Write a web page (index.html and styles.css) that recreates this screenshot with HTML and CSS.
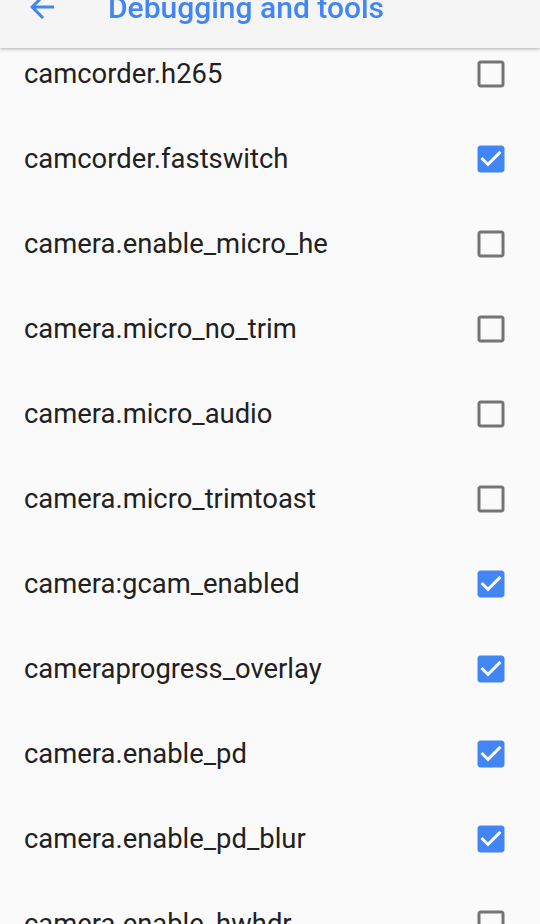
FILE: index.html
```html
<!DOCTYPE html>
<html lang="en">
<head>
    <meta charset="UTF-8">
    <meta name="viewport" content="width=device-width, initial-scale=1.0">
    <title>Debugging and tools</title>
    <link rel="stylesheet" href="styles.css">
</head>
<body>
    <header class="app-bar">
        <svg class="back-icon" viewBox="0 0 24 24"><path d="M20 11H7.83l5.59-5.59L12 4l-8 8 8 8 1.41-1.41L7.83 13H20v-2z"/></svg>
        <h1>Debugging and tools</h1>
    </header>

    <ul class="settings-list">
        <li class="row"><span>camcorder.h265</span><svg class="box" viewBox="0 0 24 24"><path d="M19 5v14H5V5h14m0-2H5c-1.1 0-2 .9-2 2v14c0 1.1.9 2 2 2h14c1.1 0 2-.9 2-2V5c0-1.1-.9-2-2-2z"/></svg></li>
        <li class="row"><span>camcorder.fastswitch</span><svg class="box checked" viewBox="0 0 24 24"><path d="M19 3H5c-1.11 0-2 .9-2 2v14c0 1.1.89 2 2 2h14c1.11 0 2-.9 2-2V5c0-1.1-.89-2-2-2zm-9 14l-5-5 1.41-1.41L10 14.17l7.59-7.59L19 8l-9 9z"/></svg></li>
        <li class="row"><span>camera.enable_micro_he</span><svg class="box" viewBox="0 0 24 24"><path d="M19 5v14H5V5h14m0-2H5c-1.1 0-2 .9-2 2v14c0 1.1.9 2 2 2h14c1.1 0 2-.9 2-2V5c0-1.1-.9-2-2-2z"/></svg></li>
        <li class="row"><span>camera.micro_no_trim</span><svg class="box" viewBox="0 0 24 24"><path d="M19 5v14H5V5h14m0-2H5c-1.1 0-2 .9-2 2v14c0 1.1.9 2 2 2h14c1.1 0 2-.9 2-2V5c0-1.1-.9-2-2-2z"/></svg></li>
        <li class="row"><span>camera.micro_audio</span><svg class="box" viewBox="0 0 24 24"><path d="M19 5v14H5V5h14m0-2H5c-1.1 0-2 .9-2 2v14c0 1.1.9 2 2 2h14c1.1 0 2-.9 2-2V5c0-1.1-.9-2-2-2z"/></svg></li>
        <li class="row"><span>camera.micro_trimtoast</span><svg class="box" viewBox="0 0 24 24"><path d="M19 5v14H5V5h14m0-2H5c-1.1 0-2 .9-2 2v14c0 1.1.9 2 2 2h14c1.1 0 2-.9 2-2V5c0-1.1-.9-2-2-2z"/></svg></li>
        <li class="row"><span>camera:gcam_enabled</span><svg class="box checked" viewBox="0 0 24 24"><path d="M19 3H5c-1.11 0-2 .9-2 2v14c0 1.1.89 2 2 2h14c1.11 0 2-.9 2-2V5c0-1.1-.89-2-2-2zm-9 14l-5-5 1.41-1.41L10 14.17l7.59-7.59L19 8l-9 9z"/></svg></li>
        <li class="row"><span>cameraprogress_overlay</span><svg class="box checked" viewBox="0 0 24 24"><path d="M19 3H5c-1.11 0-2 .9-2 2v14c0 1.1.89 2 2 2h14c1.11 0 2-.9 2-2V5c0-1.1-.89-2-2-2zm-9 14l-5-5 1.41-1.41L10 14.17l7.59-7.59L19 8l-9 9z"/></svg></li>
        <li class="row"><span>camera.enable_pd</span><svg class="box checked" viewBox="0 0 24 24"><path d="M19 3H5c-1.11 0-2 .9-2 2v14c0 1.1.89 2 2 2h14c1.11 0 2-.9 2-2V5c0-1.1-.89-2-2-2zm-9 14l-5-5 1.41-1.41L10 14.17l7.59-7.59L19 8l-9 9z"/></svg></li>
        <li class="row"><span>camera.enable_pd_blur</span><svg class="box checked" viewBox="0 0 24 24"><path d="M19 3H5c-1.11 0-2 .9-2 2v14c0 1.1.89 2 2 2h14c1.11 0 2-.9 2-2V5c0-1.1-.89-2-2-2zm-9 14l-5-5 1.41-1.41L10 14.17l7.59-7.59L19 8l-9 9z"/></svg></li>
        <li class="row"><span>camera.enable_hwhdr</span><svg class="box" viewBox="0 0 24 24"><path d="M19 5v14H5V5h14m0-2H5c-1.1 0-2 .9-2 2v14c0 1.1.9 2 2 2h14c1.1 0 2-.9 2-2V5c0-1.1-.9-2-2-2z"/></svg></li>
    </ul>
</body>
</html>
```

FILE: styles.css
```css
:root {
    --blue: #4285f4;
    --text: #212121;
    --grey: #757575;
}

* {
    margin: 0;
    padding: 0;
    box-sizing: border-box;
}

html, body {
    height: 100%;
    overflow: hidden;
}

body {
    background: #fafafa;
    font-family: Roboto, "Noto Sans", sans-serif;
    color: var(--text);
}

.app-bar {
    position: fixed;
    top: -34px;
    left: 0;
    right: 0;
    height: 82px;
    display: flex;
    align-items: center;
    background: #f5f5f5;
    box-shadow: 0 1px 3px rgba(0, 0, 0, 0.22), 0 2px 4px rgba(0, 0, 0, 0.08);
    z-index: 2;
}

.back-icon {
    width: 36px;
    height: 36px;
    margin-left: 24px;
    fill: var(--blue);
}

.app-bar h1 {
    margin-left: 48px;
    font-size: 30px;
    font-weight: 500;
    color: var(--blue);
}

.settings-list {
    list-style: none;
    padding-top: 31px;
}

.row {
    height: 85px;
    display: flex;
    align-items: center;
    justify-content: space-between;
    padding: 0 31px 0 24px;
    font-size: 27.4px;
}

.box {
    width: 36px;
    height: 36px;
    fill: var(--grey);
}

.box.checked {
    fill: var(--blue);
}
```
